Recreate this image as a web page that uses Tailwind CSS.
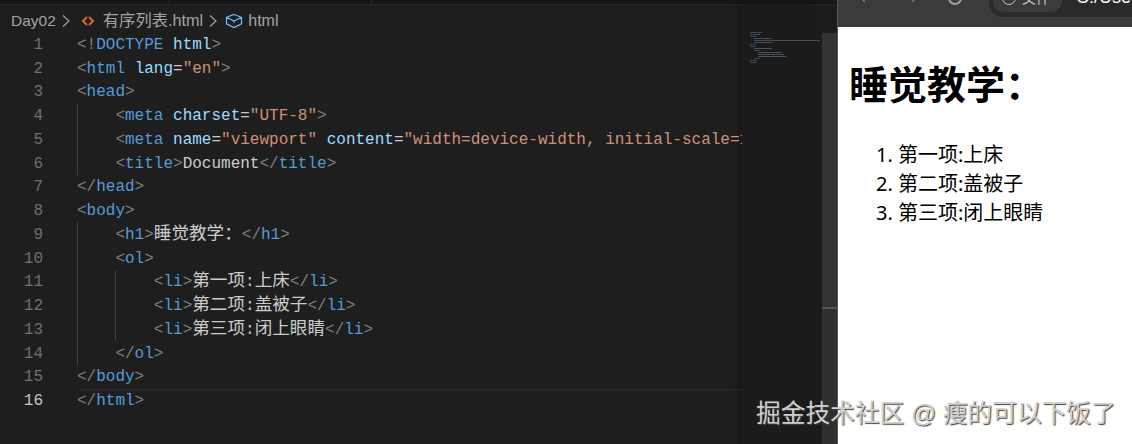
<!DOCTYPE html>
<html lang="en">

<head>
    <meta charset="UTF-8">
    <title>有序列表.html</title>
    <script src="https://cdn.jsdelivr.net/npm/@tailwindcss/browser@4"></script>
</head>

<body class="relative w-[1132px] h-[444px] overflow-hidden bg-[#1e1e1e] flex font-['Liberation_Sans','Noto_Sans_CJK_SC',sans-serif]">

    <!-- editor -->
    <div class="w-[837px] h-full flex flex-col">
        <!-- tabs strip -->
        <div class="h-[5px] flex bg-[#161616] border-b border-[#252525]">
            <div class="w-[170px] border-r border-[#2c2c2c]"></div>
            <div class="w-[202px] border-r border-[#2c2c2c]"></div>
        </div>

        <div class="flex-1 flex min-h-0">
            <div class="w-[742px] flex flex-col">
                <!-- breadcrumb -->
                <div class="h-[27px] pt-[4px] pl-[11px] flex items-center text-[15.5px] text-[#a3a3a3]">
                    <span>Day02</span>
                    <svg class="w-[14px] h-[14px] ml-[3px]" viewBox="0 0 14 14" fill="none" stroke="#a3a3a3" stroke-width="1.2"><path d="M4 1.500l6 5.500-6 5.500"/></svg>
                    <svg class="w-[14px] h-[14px] ml-[8px] mr-[8px]" viewBox="0 0 14 14" fill="none" stroke="#d9692f" stroke-width="2"><path d="M6 3L2 7l4 4M8 3l4 4-4 4"/></svg>
                    <span class="text-[16.300px]">有序列表.html</span>
                    <svg class="w-[14px] h-[14px] ml-[3px] mr-[5px]" viewBox="0 0 14 14" fill="none" stroke="#a3a3a3" stroke-width="1.2"><path d="M4 1.500l6 5.500-6 5.500"/></svg>
                    <svg class="w-[18px] h-[16px] mr-[5px]" viewBox="0 0 18 16" fill="none" stroke="#75beff" stroke-width="1.2"><path d="M9 1.500l7.500 2.800v6.600L9 14.500l-7.500-3.600V4.300zM1.500 4.300L9 8l7.500-3.700M9 8v2"/></svg>
                    <span class="text-[16px]">html</span>
                </div>

                <!-- code -->
                <div class="relative flex pt-[2px] font-['Liberation_Mono','Noto_Sans_CJK_SC',monospace] text-[16px] leading-[23.73px]">
                    <div class="w-[77px] pr-[34px] text-right text-[#707070] shrink-0">
                        <div>1</div><div>2</div><div>3</div><div>4</div><div>5</div><div>6</div><div>7</div><div>8</div><div>9</div><div>10</div><div>11</div><div>12</div><div>13</div><div>14</div><div>15</div><div class="text-[#c6c6c6]">16</div>
                    </div>
                    <div class="flex-1 text-[#cccccc] overflow-hidden *:whitespace-pre">
                        <div><span class="text-[#808080]">&lt;!</span><span class="text-[#569cd6]">DOCTYPE</span> <span class="text-[#9cdcfe]">html</span><span class="text-[#808080]">&gt;</span></div>
                        <div><span class="text-[#808080]">&lt;</span><span class="text-[#569cd6]">html</span> <span class="text-[#9cdcfe]">lang</span>=<span class="text-[#ce9178]">"en"</span><span class="text-[#808080]">&gt;</span></div>
                        <div><span class="text-[#808080]">&lt;</span><span class="text-[#569cd6]">head</span><span class="text-[#808080]">&gt;</span></div>
                        <div>    <span class="text-[#808080]">&lt;</span><span class="text-[#569cd6]">meta</span> <span class="text-[#9cdcfe]">charset</span>=<span class="text-[#ce9178]">"UTF-8"</span><span class="text-[#808080]">&gt;</span></div>
                        <div>    <span class="text-[#808080]">&lt;</span><span class="text-[#569cd6]">meta</span> <span class="text-[#9cdcfe]">name</span>=<span class="text-[#ce9178]">"viewport"</span> <span class="text-[#9cdcfe]">content</span>=<span class="text-[#ce9178]">"width=device-width, initial-scale=1.0"</span><span class="text-[#808080]">&gt;</span></div>
                        <div>    <span class="text-[#808080]">&lt;</span><span class="text-[#569cd6]">title</span><span class="text-[#808080]">&gt;</span>Document<span class="text-[#808080]">&lt;/</span><span class="text-[#569cd6]">title</span><span class="text-[#808080]">&gt;</span></div>
                        <div><span class="text-[#808080]">&lt;/</span><span class="text-[#569cd6]">head</span><span class="text-[#808080]">&gt;</span></div>
                        <div><span class="text-[#808080]">&lt;</span><span class="text-[#569cd6]">body</span><span class="text-[#808080]">&gt;</span></div>
                        <div>    <span class="text-[#808080]">&lt;</span><span class="text-[#569cd6]">h1</span><span class="text-[#808080]">&gt;</span><span class="text-[17.6px] leading-none">睡觉教学：</span><span class="text-[#808080]">&lt;/</span><span class="text-[#569cd6]">h1</span><span class="text-[#808080]">&gt;</span></div>
                        <div>    <span class="text-[#808080]">&lt;</span><span class="text-[#569cd6]">ol</span><span class="text-[#808080]">&gt;</span></div>
                        <div>        <span class="text-[#808080]">&lt;</span><span class="text-[#569cd6]">li</span><span class="text-[#808080]">&gt;</span><span class="text-[17.6px] leading-none">第一项</span>:<span class="text-[17.6px] leading-none">上床</span><span class="text-[#808080]">&lt;/</span><span class="text-[#569cd6]">li</span><span class="text-[#808080]">&gt;</span></div>
                        <div>        <span class="text-[#808080]">&lt;</span><span class="text-[#569cd6]">li</span><span class="text-[#808080]">&gt;</span><span class="text-[17.6px] leading-none">第二项</span>:<span class="text-[17.6px] leading-none">盖被子</span><span class="text-[#808080]">&lt;/</span><span class="text-[#569cd6]">li</span><span class="text-[#808080]">&gt;</span></div>
                        <div>        <span class="text-[#808080]">&lt;</span><span class="text-[#569cd6]">li</span><span class="text-[#808080]">&gt;</span><span class="text-[17.6px] leading-none">第三项</span>:<span class="text-[17.6px] leading-none">闭上眼睛</span><span class="text-[#808080]">&lt;/</span><span class="text-[#569cd6]">li</span><span class="text-[#808080]">&gt;</span></div>
                        <div>    <span class="text-[#808080]">&lt;/</span><span class="text-[#569cd6]">ol</span><span class="text-[#808080]">&gt;</span></div>
                        <div><span class="text-[#808080]">&lt;/</span><span class="text-[#569cd6]">body</span><span class="text-[#808080]">&gt;</span></div>
                        <div class="border-y border-[#2a2a2a] -my-px"><span class="text-[#808080]">&lt;/</span><span class="text-[#569cd6]">html</span><span class="text-[#808080]">&gt;</span></div>
                    </div>
                    <!-- indent guides -->
                    <div class="absolute left-[77px] top-[72px] h-[71px] w-px bg-[#404040]"></div>
                    <div class="absolute left-[77px] top-[190px] h-[143px] w-px bg-[#404040]"></div>
                    <div class="absolute left-[115px] top-[238px] h-[71px] w-px bg-[#404040]"></div>
                </div>
            </div>

            <!-- minimap -->
            <div class="w-[80px] bg-[#1b1b1b] shadow-[-4px_0_6px_rgba(0,0,0,0.25)] pt-[27px] pl-[8px]">
                <div class="flex flex-col gap-[1px] opacity-70">
                    <div class="w-[12px] h-px bg-[#3f5f7f]"></div>
                    <div class="w-[10px] h-px bg-[#3f5f7f]"></div>
                    <div class="w-[6px] h-px bg-[#3f5f7f]"></div>
                    <div class="w-[18px] h-px ml-[4px] bg-[#4b6a80]"></div>
                    <div class="w-[66px] h-px ml-[4px] bg-[#6f5a50]"></div>
                    <div class="w-[18px] h-px ml-[4px] bg-[#4b6a80]"></div>
                    <div class="w-[6px] h-px bg-[#3f5f7f]"></div>
                    <div class="w-[6px] h-px bg-[#3f5f7f]"></div>
                    <div class="w-[18px] h-px ml-[4px] bg-[#556a78]"></div>
                    <div class="w-[6px] h-px ml-[4px] bg-[#3f5f7f]"></div>
                    <div class="w-[24px] h-px ml-[8px] bg-[#556a78]"></div>
                    <div class="w-[26px] h-px ml-[8px] bg-[#556a78]"></div>
                    <div class="w-[28px] h-px ml-[8px] bg-[#556a78]"></div>
                    <div class="w-[6px] h-px ml-[4px] bg-[#3f5f7f]"></div>
                    <div class="w-[7px] h-px bg-[#3f5f7f]"></div>
                    <div class="w-[7px] h-px bg-[#3f5f7f]"></div>
                </div>
            </div>

            <!-- scrollbar -->
            <div class="w-[15px] flex flex-col bg-[#1e1e1e]">
                <div class="h-[28px] bg-[#1c1c1c]"></div>
                <div class="h-[276px] bg-[#333333] border-b-2 border-[#555555]"></div>
                <div class="flex-1 bg-[#2f2f2f]"></div>
            </div>
        </div>
    </div>

    <!-- browser preview -->
    <div class="flex-1 flex flex-col border-l border-[#5a5a5a]">
        <div class="h-[27px] bg-[#3b3b3b] relative overflow-hidden text-[#c8c8c8] text-[14px]">
            <svg class="absolute left-[20px] -top-[6px] w-[80px] h-[14px]" viewBox="0 0 80 14" fill="none" stroke="#777777" stroke-width="1.500"><path d="M7 0L3 4 7 8M54 0l4 4-4 4"/></svg>
            <div class="absolute left-[110px] -top-[9px] w-[14px] h-[14px] rounded-full border-2 border-[#a0a0a0]"></div>
            <div class="absolute left-[151px] -top-[10px] w-[200px] h-[27px] rounded-l-full bg-[#2a2a2a]">
                <div class="absolute left-[4px] top-0 w-[69px] h-[22px] rounded-full bg-[#3b3b3b]"></div>
                <div class="absolute left-[13px] top-[1px] w-[14px] h-[14px] rounded-full border border-[#c8c8c8]"></div>
                <span class="absolute left-[33px] -top-[2px]">文件</span>
                <span class="absolute left-[87px] -top-[6px] text-[18px] text-white">C:/Users</span>
            </div>
        </div>
        <div class="flex-1 bg-white text-black pl-[11px]">
            <h1 class="mt-[36px] text-[39px] leading-[46px] font-bold">睡觉教学：</h1>
            <ol class="mt-[31px] pl-[49px] list-decimal text-[20px] leading-[29px] font-['Noto_Sans','Noto_Sans_CJK_SC',sans-serif]">
                <li>第一项:上床</li>
                <li>第二项:盖被子</li>
                <li>第三项:闭上眼睛</li>
            </ol>
        </div>
    </div>

    <!-- watermark -->
    <div class="absolute left-[756px] top-[399px] text-[24.7px] leading-[30px] text-[#cfcfcf] [text-shadow:1px_1px_1px_#444444]">掘金技术社区 @ 瘦的可以下饭了</div>

</body>

</html>
